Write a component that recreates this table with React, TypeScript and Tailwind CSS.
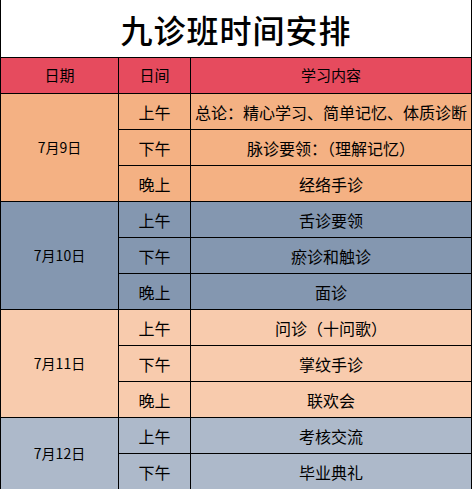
import React from "react";

const font = { fontFamily: '"Noto Sans CJK SC", "Noto Sans", sans-serif' };

const days = [
  {
    date: "7月9日",
    bg: "bg-[#f4b183]",
    rows: [
      ["上午", "总论：精心学习、简单记忆、体质诊断"],
      ["下午", "脉诊要领：（理解记忆）"],
      ["晚上", "经络手诊"],
    ],
  },
  {
    date: "7月10日",
    bg: "bg-[#8497b0]",
    rows: [
      ["上午", "舌诊要领"],
      ["下午", "瘀诊和触诊"],
      ["晚上", "面诊"],
    ],
  },
  {
    date: "7月11日",
    bg: "bg-[#f8cbad]",
    rows: [
      ["上午", "问诊（十问歌）"],
      ["下午", "掌纹手诊"],
      ["晚上", "联欢会"],
    ],
  },
  {
    date: "7月12日",
    bg: "bg-[#adb9ca]",
    rows: [
      ["上午", "考核交流"],
      ["下午", "毕业典礼"],
    ],
  },
];

function Cell({ className, children }: { className: string; children: React.ReactNode }) {
  return (
    <div className={`flex items-center justify-center text-black ${className}`}>
      {children}
    </div>
  );
}

export default function App() {
  return (
    <div className="w-[473px] h-[490px] bg-white overflow-hidden" style={font}>
      <div className="w-[472px] grid grid-cols-[117px_71px_280px] grid-rows-[57px_repeat(12,35px)] gap-px bg-black px-px">
        <div className="col-span-3 bg-white flex items-center justify-center text-[32px] font-medium tracking-[1px] text-black">
          九诊班时间安排
        </div>
        <Cell className="bg-[#e64b5e] text-[15px]">日期</Cell>
        <Cell className="bg-[#e64b5e] text-[15px]">日间</Cell>
        <Cell className="bg-[#e64b5e] text-[15px]">学习内容</Cell>
        {days.map((d) => (
          <React.Fragment key={d.date}>
            <Cell className={`${d.bg} text-[14px] ${d.rows.length === 3 ? "row-span-3" : "row-span-2"}`}>
              {d.date}
            </Cell>
            {d.rows.map(([time, topic], i) => (
              <React.Fragment key={i}>
                <Cell className={`${d.bg} col-start-2 text-[16px]`}>{time}</Cell>
                <Cell className={`${d.bg} text-[16px] whitespace-nowrap`}>{topic}</Cell>
              </React.Fragment>
            ))}
          </React.Fragment>
        ))}
      </div>
    </div>
  );
}
